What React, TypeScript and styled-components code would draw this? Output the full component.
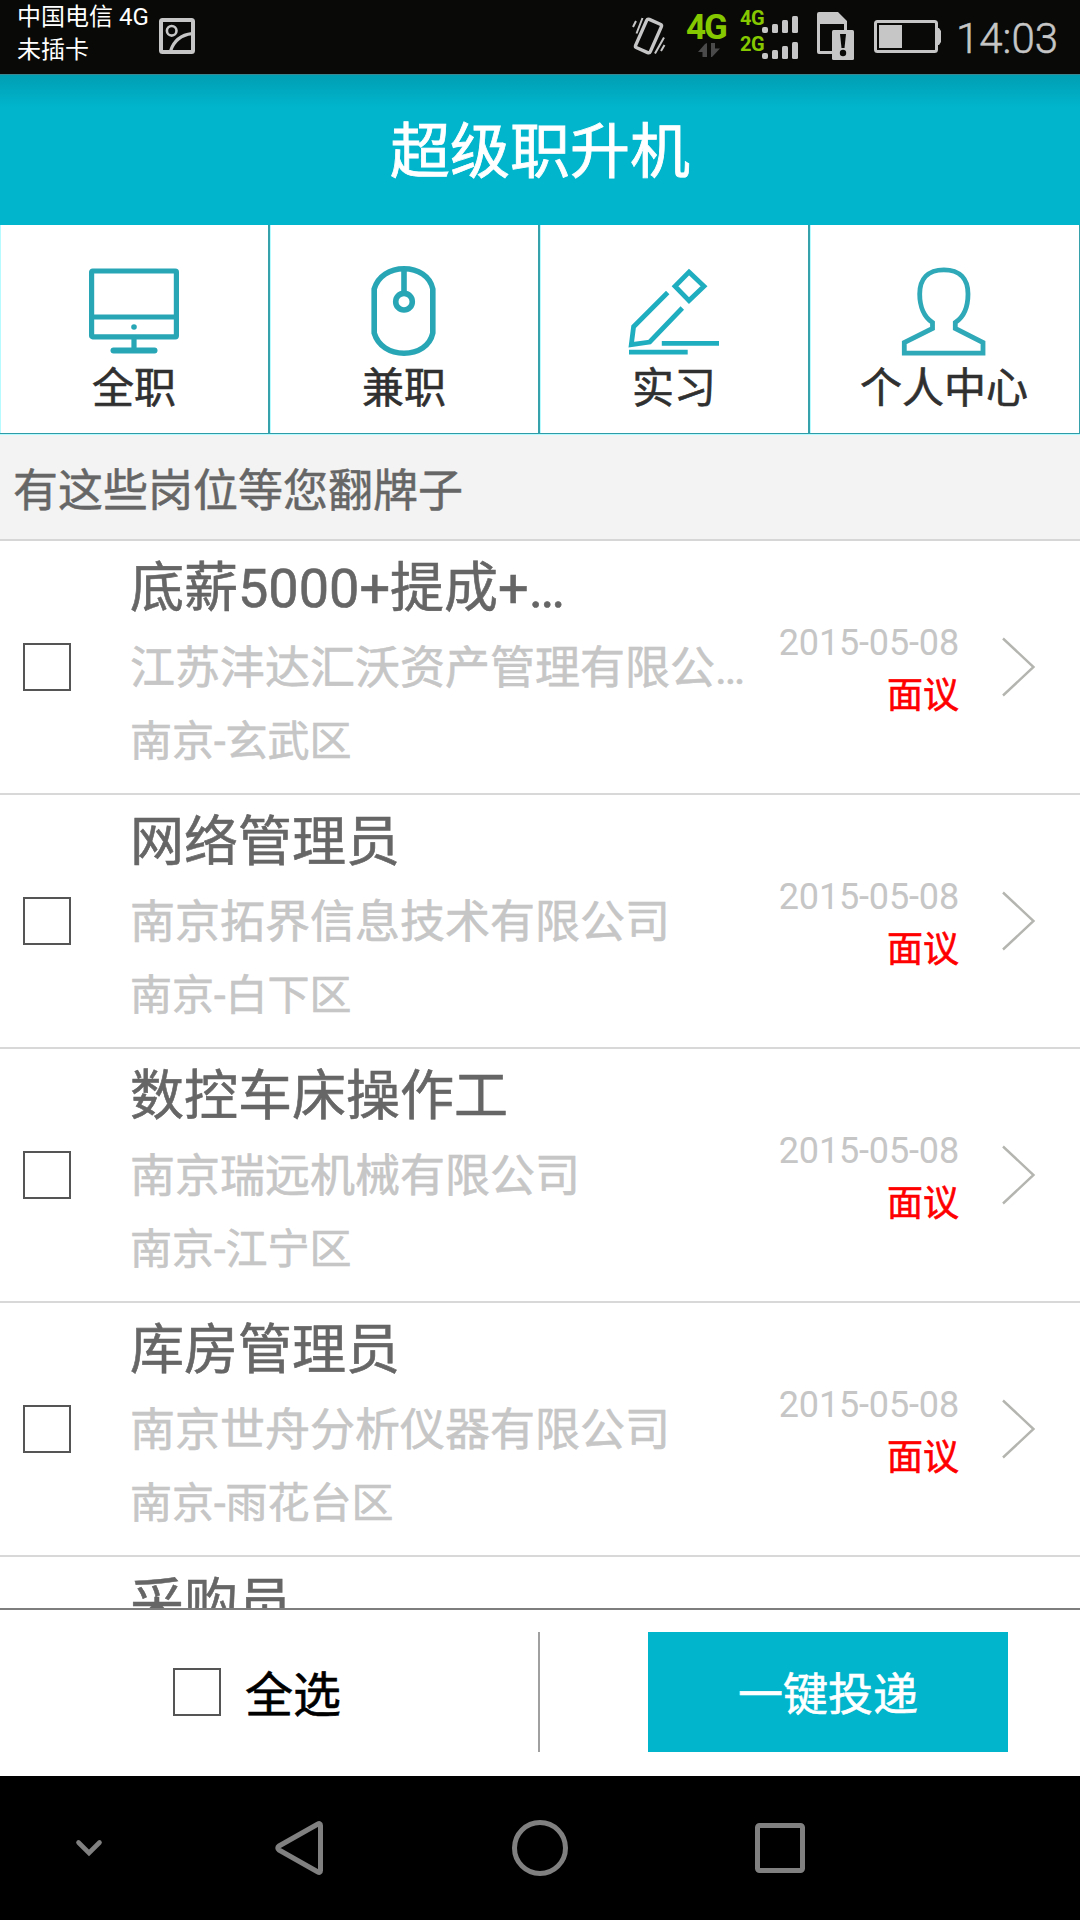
import React from 'react';
import styled, { createGlobalStyle } from 'styled-components';

const GlobalStyle = createGlobalStyle`
  * { box-sizing: border-box; }
  html, body { margin: 0; padding: 0; background: #fff; }
  body { font-family: Roboto, "Noto Sans CJK SC", sans-serif; }
`;

const TEAL = '#00b5cc';

const Screen = styled.div`
  width: 1080px;
  height: 1920px;
  display: flex;
  flex-direction: column;
  overflow: hidden;
  background: #fff;
`;

const StatusBar = styled.div`
  flex: none;
  height: 74px;
  display: flex;
  align-items: flex-start;
  background: #090a08;
  color: #fff;
`;

const Carrier = styled.div`
  width: 142px;
  margin-left: 17px;
  padding-top: 1px;
  font-size: 24px;
  line-height: 33px;
  white-space: nowrap;
`;

const StatusIcons = styled.div`
  margin-left: auto;
  display: flex;
  align-items: flex-start;
`;

const Glyph = styled.svg<{ $top?: number; $left?: number }>`
  display: block;
  flex: none;
  overflow: visible;
  margin-top: ${(p) => p.$top ?? 0}px;
  margin-left: ${(p) => p.$left ?? 0}px;
`;

const DataType = styled.div`
  width: 53px;
  padding: 10px 0 0 20px;
  font-size: 35px;
  line-height: 36px;
  font-weight: 700;
  letter-spacing: -2px;
  color: #86c800;
  white-space: nowrap;
`;

const SignalLabels = styled.div`
  width: 23px;
  padding-top: 5px;
  font-size: 20px;
  line-height: 26px;
  font-weight: 700;
  letter-spacing: -0.5px;
  color: #86c800;
`;

const Clock = styled.div`
  width: 139px;
  padding: 14px 0 0 15px;
  font-size: 42px;
  line-height: 50px;
  font-weight: 300;
  -webkit-text-stroke: 0.5px #c6c6c6;
  color: #c6c6c6;
  white-space: nowrap;
`;

const Header = styled.header`
  flex: none;
  height: 151px;
  padding-top: 5px;
  display: flex;
  align-items: center;
  justify-content: center;
  background: linear-gradient(rgba(0, 40, 50, 0.16), rgba(0, 40, 50, 0) 32px), ${TEAL};
  border-top: 1px solid #3b8791;
  color: #fff;
  font-size: 60px;
  line-height: 80px;
  -webkit-text-stroke: 0.8px #fff;
`;

const Tabs = styled.nav`
  flex: none;
  height: 210px;
  display: grid;
  grid-template-columns: repeat(4, 270px);
  border-bottom: 1px solid #b5fbff;
`;

const Tab = styled.div`
  display: flex;
  flex-direction: column;
  align-items: center;
  padding-top: 41px;
  border-right: 2px solid #36a0ab;
  border-bottom: 1px solid #2f9ba7;
  box-shadow: inset 1px 0 0 #b5fbff;
  color: #303030;
  font-size: 42px;
  line-height: 56px;
  -webkit-text-stroke: 0.6px #303030;

  span { margin-top: 5px; }
  &:last-child { border-right-width: 1px; padding-right: 1px; }
`;

const SectionTitle = styled.div`
  flex: none;
  height: 106px;
  padding-left: 13px;
  border-bottom: 2px solid #d6d6d6;
  background: #f3f3f3;
  color: #666;
  font-size: 45px;
  line-height: 114px;
  -webkit-text-stroke: 0.5px #666;
`;

const List = styled.div`
  flex: 1;
  min-height: 0;
  overflow: hidden;
`;

const Row = styled.div`
  height: 254px;
  display: flex;
  align-items: center;
  padding-left: 23px;
  border-bottom: 2px solid #d8d8d8;
`;

const Checkbox = styled.span`
  flex: none;
  width: 48px;
  height: 48px;
  border: 2px solid #555;
  background: #fff;
`;

const JobInfo = styled.div`
  width: 630px;
  height: 100%;
  margin-left: 59px;
  padding-top: 13px;
  white-space: nowrap;
`;

const JobTitle = styled.div`
  height: 75px;
  color: #666;
  font-size: 54px;
  line-height: 70px;
  -webkit-text-stroke: 0.6px #666;
`;

const Company = styled.div`
  height: 77px;
  color: #c6c6c6;
  font-size: 45px;
  line-height: 80px;
  -webkit-text-stroke: 0.6px #c6c6c6;
`;

const City = styled.div`
  color: #c6c6c6;
  font-size: 42px;
  line-height: 72px;
  -webkit-text-stroke: 0.6px #c6c6c6;
`;

const JobMeta = styled.div`
  width: 199px;
  padding-top: 6px;
  text-align: right;
  font-size: 36px;
  line-height: 53px;
`;

const PostDate = styled.div`
  color: #c6c6c6;
  letter-spacing: -0.15px;
`;

const Salary = styled.div`
  color: #f00;
  -webkit-text-stroke: 0.6px #f00;
`;

const ActionBar = styled.div`
  flex: none;
  height: 168px;
  display: grid;
  grid-template-columns: 540px 540px;
  align-items: center;
  padding-bottom: 2px;
  border-top: 2px solid #7e7e7e;
  background: #fff;
`;

const SelectAll = styled.div`
  height: 120px;
  display: flex;
  align-items: center;
  gap: 24px;
  padding-left: 173px;
  border-right: 2px solid #a0a0a0;
  color: #000;
  font-size: 48px;
  line-height: 64px;
  -webkit-text-stroke: 0.6px #000;

  span:last-child { padding-top: 7px; }
`;

const ApplyButton = styled.button`
  width: 360px;
  height: 120px;
  margin-left: 108px;
  padding: 8px 0 0;
  border: 0;
  background: ${TEAL};
  color: #fff;
  font-family: inherit;
  font-size: 45px;
  line-height: 60px;
  -webkit-text-stroke: 0.6px #fff;
`;

const NavBar = styled.div`
  flex: none;
  height: 144px;
  display: grid;
  grid-template-columns: 178px 242px 239px 241px;
  align-items: center;
  justify-items: center;
  background: #000;
`;

const MonitorIcon = () => (
  <Glyph width="90" height="90" fill="none" stroke="#29a6b6" strokeWidth="5.2">
    <rect x="2.6" y="5" width="84.8" height="65.8" rx="1" />
    <path d="M2 51H88M45 73V83" />
    <path d="M24.5 84.5H65.5" strokeWidth="6" strokeLinecap="round" />
    <circle cx="45" cy="61" r="2.8" fill="#29a6b6" stroke="none" />
  </Glyph>
);

const MouseIcon = () => (
  <Glyph width="90" height="90" fill="none" stroke="#29a6b6" strokeWidth="5.6">
    <path d="M15.2 23C19 10 31 2.8 45 2.8S71 10 73.8 23V67C71 80 59 87.200 45 87.200S19 80 15.200 67Z" />
    <path d="M45 3V27" />
    <circle cx="45" cy="35.7" r="8.3" />
  </Glyph>
);

const PenIcon = () => (
  <Glyph width="90" height="90" fill="none" stroke="#1fadc0" strokeWidth="4.8">
    <path d="M60 6L75 20.300L60 34.600L46 20.300Z" />
    <path d="M38.700 26.500L4.600 60.700L2.300 78.700L20.700 76L53.300 42" />
    <path d="M32.800 77.300H90M0 86.200H58.700" />
  </Glyph>
);

const PersonIcon = () => (
  <Glyph width="90" height="90" fill="none" stroke="#2fa8b7" strokeWidth="4.800">
    <path d="M33.500 56.500C25 51 20.700 40 20.700 28C20.700 13 29 3.800 44.900 3.800S69 13 69 28C69 40 64.800 51 56.300 56.500V62.500L84 76.500V87.200H5.300V76.500L33.500 62.500Z" />
  </Glyph>
);

const tabs = [
  { label: '全职', Icon: MonitorIcon },
  { label: '兼职', Icon: MouseIcon },
  { label: '实习', Icon: PenIcon },
  { label: '个人中心', Icon: PersonIcon },
];

const jobs = [
  { title: '底薪5000+提成+…', company: '江苏沣达汇沃资产管理有限公…', city: '南京-玄武区' },
  { title: '网络管理员', company: '南京拓界信息技术有限公司', city: '南京-白下区' },
  { title: '数控车床操作工', company: '南京瑞远机械有限公司', city: '南京-江宁区' },
  { title: '库房管理员', company: '南京世舟分析仪器有限公司', city: '南京-雨花台区' },
];

const GREY = '#c6c6c6';

const App: React.FC = () => (
  <Screen>
    <GlobalStyle />
    <StatusBar>
      <Carrier>
        <div>中国电信 4G</div>
        <div>未插卡</div>
      </Carrier>
      <Glyph width="36" height="36" $top={18} fill="none" stroke={GREY}>
        <rect x="2" y="2" width="32" height="32" rx="1.5" strokeWidth="4" />
        <circle cx="12.7" cy="12.8" r="4.8" strokeWidth="2.600" />
        <path d="M11.500 33C14.500 24 21 17 33 15.700" strokeWidth="3.200" />
      </Glyph>
      <StatusIcons>
        <Glyph width="34" height="38" $top={17} fill="none" stroke={GREY}>
          <rect x="-8" y="-15.500" width="16" height="31" rx="2" strokeWidth="3.400" transform="translate(16.500 19) rotate(24)" />
          <path d="M4 4L1 10M10.500 1L4.500 16.500M32 20.500L23 36.500M32.500 28L29 34" strokeWidth="2" />
        </Glyph>
        <DataType>4G</DataType>
        <Glyph width="22" height="14" $top={43} $left={-21} fill="#4a4a4a">
          <path d="M9 0V14H4.500V9H0L7 1ZM13 0H17V5.500H22L14 14H13Z" />
        </Glyph>
        <Glyph width="20" height="1" />
        <SignalLabels>
          <div>4G</div>
          <div>2G</div>
        </SignalLabels>
        <Glyph width="36" height="43" $top={16} $left={-1} fill={GREY}>
          {[0, 26].map((y) => (
            <g key={y} transform={`translate(0 ${y})`}>
              <rect x="0" y="11" width="6" height="6" rx="2" />
              <rect x="10" y="8" width="6" height="9" rx="1.5" />
              <rect x="20" y="4" width="6" height="13" rx="1.5" />
              <rect x="30" y="0" width="6" height="17" rx="1.5" />
            </g>
          ))}
        </Glyph>
        <Glyph width="37" height="48" $top={12} $left={19}>
          <path d="M2 0H21L30 9V20H27V12H3V39H17V42H2Q0 42 0 40V2Q0 0 2 0Z" fill={GREY} />
          <rect x="15" y="18" width="22" height="30" rx="1.5" fill={GREY} />
          <path d="M23 22H29L27.500 36H24.500Z" fill="#090a08" />
          <circle cx="26" cy="41" r="3.200" fill="#090a08" />
        </Glyph>
        <Glyph width="67" height="33" $top={20} $left={20}>
          <rect x="1.5" y="1.5" width="61" height="30" rx="2" fill="none" stroke={GREY} strokeWidth="3" />
          <rect x="5" y="5" width="23" height="23" fill={GREY} />
          <path d="M63 8H65L67 11V22L65 25H63Z" fill={GREY} />
        </Glyph>
        <Clock>14:03</Clock>
      </StatusIcons>
    </StatusBar>

    <Header>超级职升机</Header>

    <Tabs>
      {tabs.map(({ label, Icon }) => (
        <Tab key={label}>
          <Icon />
          <span>{label}</span>
        </Tab>
      ))}
    </Tabs>

    <SectionTitle>有这些岗位等您翻牌子</SectionTitle>

    <List>
      {jobs.map((job) => (
        <Row key={job.title}>
          <Checkbox />
          <JobInfo>
            <JobTitle>{job.title}</JobTitle>
            <Company>{job.company}</Company>
            <City>{job.city}</City>
          </JobInfo>
          <JobMeta>
            <PostDate>2015-05-08</PostDate>
            <Salary>面议</Salary>
          </JobMeta>
          <Glyph width="32" height="60" $left={44} fill="none" stroke="#b4b4b0" strokeWidth="2.4">
            <path d="M0 1.500L30.500 30L0 58.500" />
          </Glyph>
        </Row>
      ))}
      <Row>
        <Checkbox />
        <JobInfo>
          <JobTitle>采购员</JobTitle>
        </JobInfo>
      </Row>
    </List>

    <ActionBar>
      <SelectAll>
        <Checkbox />
        <span>全选</span>
      </SelectAll>
      <ApplyButton>一键投递</ApplyButton>
    </ActionBar>

    <NavBar>
      <Glyph width="26" height="16" fill="none" stroke="#808080" strokeWidth="4.6" strokeLinecap="round">
        <path d="M2.500 2.500L13 13L23.500 2.500" />
      </Glyph>
      <Glyph width="48" height="54" fill="none" stroke="#808080" strokeWidth="5" strokeLinejoin="round">
        <path d="M45.500 4.500Q45.500 1.500 42.500 3.200L4 25Q1.500 27 4 29L42.500 50.800Q45.500 52.500 45.500 49.500Z" />
      </Glyph>
      <Glyph width="56" height="56" fill="none" stroke="#808080" strokeWidth="5">
        <circle cx="28" cy="28" r="25.5" />
      </Glyph>
      <Glyph width="50" height="50" fill="none" stroke="#808080" strokeWidth="5">
        <rect x="2.5" y="2.5" width="45" height="45" rx="2" />
      </Glyph>
    </NavBar>
  </Screen>
);

export default App;
